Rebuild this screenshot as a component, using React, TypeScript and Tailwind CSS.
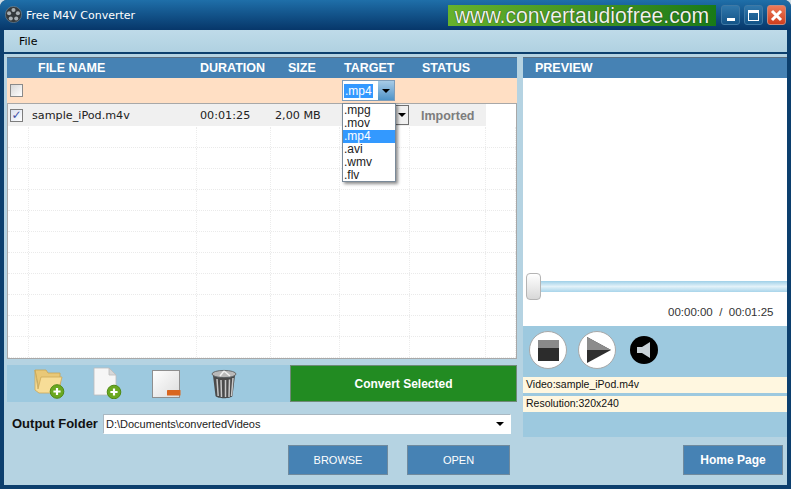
const cols = ["w-[21px]", "w-[168px]", "w-[74px]", "w-[69px]", "w-[70px]", "w-[76px]", "flex-1"];

const ReelIcon = () => (
  <svg width="17" height="17" viewBox="0 0 20 20" className="mb-[1px]">
    <circle cx="10" cy="10" r="9.5" fill="#34393c" stroke="#8f9ba2" strokeWidth="0.6" />
    <circle cx="10" cy="4.8" r="2.4" fill="#a9b0b4" />
    <circle cx="4.8" cy="8.6" r="2.4" fill="#a9b0b4" />
    <circle cx="15.2" cy="8.6" r="2.4" fill="#a9b0b4" />
    <circle cx="6.8" cy="14.8" r="2.4" fill="#a9b0b4" />
    <circle cx="13.2" cy="14.8" r="2.4" fill="#a9b0b4" />
  </svg>
);

const PlusBadge = ({ cx, cy }: { cx: number; cy: number }) => (
  <g>
    <circle cx={cx} cy={cy} r="6.8" fill="#6aa820" stroke="#4f8a14" strokeWidth="1" />
    <path d={`M${cx - 3.6} ${cy}H${cx + 3.6}M${cx} ${cy - 3.6}V${cy + 3.6}`} stroke="#fff" strokeWidth="2.2" />
  </g>
);

const FolderIcon = () => (
  <svg width="32" height="32" viewBox="0 0 32 32">
    <path d="M1 3h11l2 3h12v16H5z" fill="#e9c877" stroke="#c9a552" strokeWidth="0.8" />
    <path d="M1 3v20l4 3h19l4-16H7L4 22z" fill="#f7dd97" stroke="#cdaa58" strokeWidth="0.8" />
    <PlusBadge cx={23} cy={24.5} />
  </svg>
);

const FileIcon = () => (
  <svg width="30" height="32" viewBox="0 0 30 32">
    <path d="M1 1h15l7 7v20H1z" fill="#f6f6f6" stroke="#bdbdbd" strokeWidth="0.8" />
    <path d="M16 1v7h7z" fill="#d8d8d8" stroke="#bdbdbd" strokeWidth="0.8" />
    <PlusBadge cx={21} cy={25} />
  </svg>
);

const RemoveIcon = () => (
  <svg width="29" height="29" viewBox="0 0 29 29">
    <defs>
      <linearGradient id="rem" x1="0" y1="0" x2="1" y2="1">
        <stop offset="0" stopColor="#ffffff" />
        <stop offset="1" stopColor="#dcdcdc" />
      </linearGradient>
    </defs>
    <rect x="0.5" y="0.5" width="27" height="27" fill="url(#rem)" stroke="#8f8f8f" />
    <rect x="15" y="20" width="13.5" height="5.5" rx="0.5" fill="#d9661f" />
  </svg>
);

const TrashIcon = () => (
  <svg width="26" height="30" viewBox="0 0 26 30">
    <ellipse cx="13" cy="5" rx="12" ry="3.6" fill="#b9b9b9" stroke="#555" strokeWidth="0.8" />
    <path d="M13 2 9 7M13 2l6 5" stroke="#efefef" strokeWidth="1.6" />
    <path d="M2 6.5 4.5 27c2 3 15 3 17 0L24 6.5c-4 3-18 3-22 0z" fill="#4b4b4b" />
    <path d="M6 10l1.2 17M10 11l.5 17M14.5 11v17M18.5 10.5 18 28M22 9l-1.5 18" stroke="#c8c8c8" strokeWidth="1.5" />
  </svg>
);

const Arrow = () => <span className="block w-0 h-0 border-x-[4px] border-t-[4px] border-x-transparent border-t-black" />;

const RoundBtn = ({ children }: { children: React.ReactNode }) => (
  <div className="w-[38px] h-[38px] rounded-full bg-white border border-[#a8a8a8] flex items-center justify-center">
    {children}
  </div>
);

const WinBtn = ({ children, red }: { children: React.ReactNode; red?: boolean }) => (
  <div
    className={
      "w-[19px] h-[20px] rounded-[3px] border flex items-center justify-center " +
      (red ? "bg-gradient-to-b from-[#ec7a58] to-[#cf3d1c] border-[#c9887a]" : "bg-gradient-to-b from-[#2f77ab] to-[#135488] border-[#3f79a5]")
    }
  >
    {children}
  </div>
);

export default function App() {
  return (
    <div className="w-[791px] h-[489px] overflow-hidden bg-[#cfdde6] font-['DejaVu_Sans',sans-serif]">
      <div className="w-full h-full flex flex-col bg-[#0c3f6e] rounded-t-[7px]">
        {/* title bar */}
        <div className="h-[30px] shrink-0 flex items-center pl-[5px] pr-[5px] bg-gradient-to-b from-[#1f6fa9] to-[#07376a] rounded-t-[7px]">
          <ReelIcon />
          <span className="ml-[4px] mt-[3px] text-[11px] text-white">Free M4V Converter</span>
          <div className="ml-auto mr-[5px] w-[268px] h-[21px] flex items-center justify-center bg-gradient-to-r from-[#66b22c] to-[#187a18]">
            <span className="font-['Liberation_Sans',sans-serif] text-[21.2px] leading-none text-[#eef4e8] mt-[1px] [text-shadow:0_0_1px_#000]">
              www.convertaudiofree.com
            </span>
          </div>
          <div className="flex gap-[4px]">
            <WinBtn><span className="w-[8px] h-[3px] bg-white mt-[8px]" /></WinBtn>
            <WinBtn><span className="w-[11px] h-[11px] border border-white border-t-[3px]" /></WinBtn>
            <WinBtn red>
              <svg width="13" height="13" viewBox="0 0 13 13">
                <path d="M2 2l9 9M11 2l-9 9" stroke="#fff" strokeWidth="3" />
              </svg>
            </WinBtn>
          </div>
        </div>

        <div className="flex-1 ml-[4px] mr-[4px] mb-[4px] flex flex-col bg-[#b5d3e2] min-h-0">
          {/* menu */}
          <div className="h-[22px] shrink-0 flex items-center pt-[2px] pl-[15px] text-[11px] text-black bg-gradient-to-b from-[#bfdbe9] to-[#b0d1e1]">
            File
          </div>
          <div className="h-[2px] shrink-0 bg-[#0c3f6e]" />

          <div className="flex-1 flex pt-[3px] pl-[3px] gap-[6px] min-h-0">
            {/* left column */}
            <div className="w-[510px] flex flex-col">
              <div className="relative h-[302px] flex flex-col shrink-0">
                <div className="h-[21px] flex items-center bg-[#4682b4] border-t border-[#5a6f82] text-white font-['Liberation_Sans',sans-serif] font-bold text-[12.5px]">
                  <span className="ml-[31px] w-[162px]">FILE NAME</span>
                  <span className="w-[88px]">DURATION</span>
                  <span className="w-[56px]">SIZE</span>
                  <span className="w-[78px]">TARGET</span>
                  <span>STATUS</span>
                </div>
                <div className="h-[25px] flex items-center bg-[#ffdfc4]">
                  <span className="ml-[3px] w-[13px] h-[13px] border border-[#8a8a8a] bg-gradient-to-br from-[#d8d8d8] to-white" />
                  {/* target combo */}
                  <div className="ml-[319px] w-[53px] h-[21px] flex items-center bg-white border border-[#7f9db9] font-['Liberation_Sans',sans-serif] text-[12px]">
                    <span className="ml-[1px] px-[1px] bg-[#3399ff] text-white leading-[14px]">.mp4</span>
                    <span className="ml-auto w-[16px] h-full flex items-center justify-center bg-gradient-to-b from-[#a7cbe6] to-[#4f94c8]">
                      <Arrow />
                    </span>
                  </div>
                </div>
                <div className="flex-1 flex flex-col bg-white border border-[#a8a8a8] overflow-hidden">
                  <div className="h-[22px] mb-[1px] shrink-0 flex items-center text-[11.2px] text-[#222]">
                    <div className="w-[478px] h-full flex items-center bg-[#f0f0f0]">
                      <span className="ml-[2px] w-[13px] h-[13px] border border-[#7d7d7d] bg-gradient-to-br from-[#d9e0ee] to-white flex items-center justify-center text-[12px] font-bold leading-none text-[#3f4fa5]">✓</span>
                      <span className="ml-[9px] mt-[2px] w-[168px]">sample_iPod.m4v</span>
                      <span className="mt-[2px] w-[75px]">00:01:25</span>
                      <span className="mt-[2px] w-[121px]">2,00 MB</span>
                      <span className="w-[13px] h-[20px] flex items-center justify-center border border-[#707070] border-l-0">
                        <Arrow />
                      </span>
                      <span className="ml-[12px] mt-[2px] font-['Liberation_Sans',sans-serif] font-bold text-[#7d7d7d] text-[12.5px]">Imported</span>
                    </div>
                  </div>
                  {Array.from({ length: 11 }).map((_, r) => (
                    <div key={r} className="h-[21px] shrink-0 flex border-b border-dotted border-[#eaeaea]">
                      {cols.map((c, i) => (
                        <div key={i} className={c + " h-full border-r border-dotted border-[#ececec]"} />
                      ))}
                    </div>
                  ))}
                </div>

                {/* open dropdown */}
                <div className="absolute left-[335px] top-[46px] w-[54px] h-[79px] flex flex-col bg-white border border-[#7a8a99] shadow-[2px_2px_3px_rgba(0,0,0,0.45)] font-['Liberation_Sans',sans-serif] text-[12px] leading-[13px] text-[#222]">
                  <span className="pl-[1px]">.mpg</span>
                  <span className="pl-[1px]">.mov</span>
                  <span className="pl-[1px] bg-[#3399ff] text-white">.mp4</span>
                  <span className="pl-[1px]">.avi</span>
                  <span className="pl-[1px]">.wmv</span>
                  <span className="pl-[1px]">.flv</span>
                </div>
              </div>

              {/* toolbar */}
              <div className="mt-[6px] h-[37px] flex shrink-0">
                <div className="w-[283px] h-full flex items-center bg-[#9dc9df]">
                  <div className="ml-[27px] -mt-[1px]"><FolderIcon /></div>
                  <div className="ml-[27px] -mt-[1px]"><FileIcon /></div>
                  <div className="ml-[29px] mt-[2px]"><RemoveIcon /></div>
                  <div className="ml-[30px]"><TrashIcon /></div>
                </div>
                <div className="flex-1 flex items-center justify-center bg-[#228b22] border border-[#6f8a78] text-white font-bold text-[12px] font-['Liberation_Sans',sans-serif]">
                  Convert Selected
                </div>
              </div>

              {/* output folder */}
              <div className="mt-[12px] h-[20px] flex items-center shrink-0 font-['Liberation_Sans',sans-serif]">
                <span className="ml-[5px] w-[91px] font-bold text-[13px] text-[#111]">Output Folder</span>
                <div className="w-[408px] h-[20px] flex items-center bg-white border border-[#a9b8c2] border-b-white border-r-white rounded-[1px] text-[11px] text-[#222] pl-[2px] pr-[6px]">
                  <span>D:\Documents\convertedVideos</span>
                  <span className="ml-auto"><Arrow /></span>
                </div>
              </div>

              {/* bottom buttons */}
              <div className="mt-[11px] flex font-['Liberation_Sans',sans-serif] text-[11px] text-white">
                <div className="ml-[281px] w-[100px] h-[30px] flex items-center justify-center bg-[#4682b4] border border-[#6f8a9e]">BROWSE</div>
                <div className="ml-[19px] w-[103px] h-[30px] flex items-center justify-center bg-[#4682b4] border border-[#6f8a9e]">OPEN</div>
              </div>
            </div>

            {/* preview column */}
            <div className="w-[264px] flex flex-col">
              <div className="h-[21px] flex items-center pl-[12px] bg-[#4682b4] border-t border-[#5a6f82] text-white font-['Liberation_Sans',sans-serif] font-bold text-[12.5px]">
                PREVIEW
              </div>
              <div className="h-[248px] flex flex-col bg-white font-['Liberation_Sans',sans-serif]">
                <div className="mt-[194px] h-[28px] flex items-center pl-[3px]">
                  <span className="w-[15px] h-[27px] rounded-[4px] border border-[#b4b4b4] bg-gradient-to-b from-white to-[#d8d8d8] shrink-0" />
                  <span className="flex-1 h-[11px] bg-gradient-to-b from-[#9fd0e8] via-[#e3f2f9] to-[#a8d4ea]" />
                </div>
                <div className="mt-[5px] pl-[145px] text-[11.5px] leading-[14px] text-[#333] whitespace-pre">00:00:00  /  00:01:25</div>
              </div>
              <div className="h-[111px] flex flex-col bg-[#9dc9df] font-['Liberation_Sans',sans-serif] text-[10.5px] text-[#111]">
                <div className="h-[51px] flex items-center pl-[6px] pb-[3px] gap-[11px] shrink-0">
                  <RoundBtn>
                    <span className="w-[21px] h-[21px] bg-gradient-to-b from-[#8a8a8a] from-40% to-[#2c2c2c] to-40%" />
                  </RoundBtn>
                  <RoundBtn>
                    <svg width="26" height="28" viewBox="0 0 26 28" className="ml-[4px]">
                      <path d="M1 1 25 14 1 27z" fill="#2e2e2e" />
                      <path d="M1 1 25 14H1z" fill="#8c8c8c" />
                    </svg>
                  </RoundBtn>
                  <div className="ml-[3px] w-[28px] h-[28px] rounded-full bg-black flex items-center justify-center">
                    <svg width="14" height="16" viewBox="0 0 14 16">
                      <path d="M0 5h5l8-5v16l-8-5H0z" fill="#c9d2d8" />
                    </svg>
                  </div>
                </div>
                <div className="h-[16px] flex items-center bg-[#fff7e0] pl-[3px]">Video:sample_iPod.m4v</div>
                <div className="mt-[3px] h-[16px] flex items-center bg-[#fff7e0] pl-[3px]">Resolution:320x240</div>
              </div>
              <div className="mt-[8px] ml-[160px] w-[100px] h-[30px] flex items-center justify-center bg-[#4682b4] border border-[#6f8a9e] text-white font-['Liberation_Sans',sans-serif] font-bold text-[12px]">
                Home Page
              </div>
            </div>
          </div>
        </div>
      </div>
    </div>
  );
}
